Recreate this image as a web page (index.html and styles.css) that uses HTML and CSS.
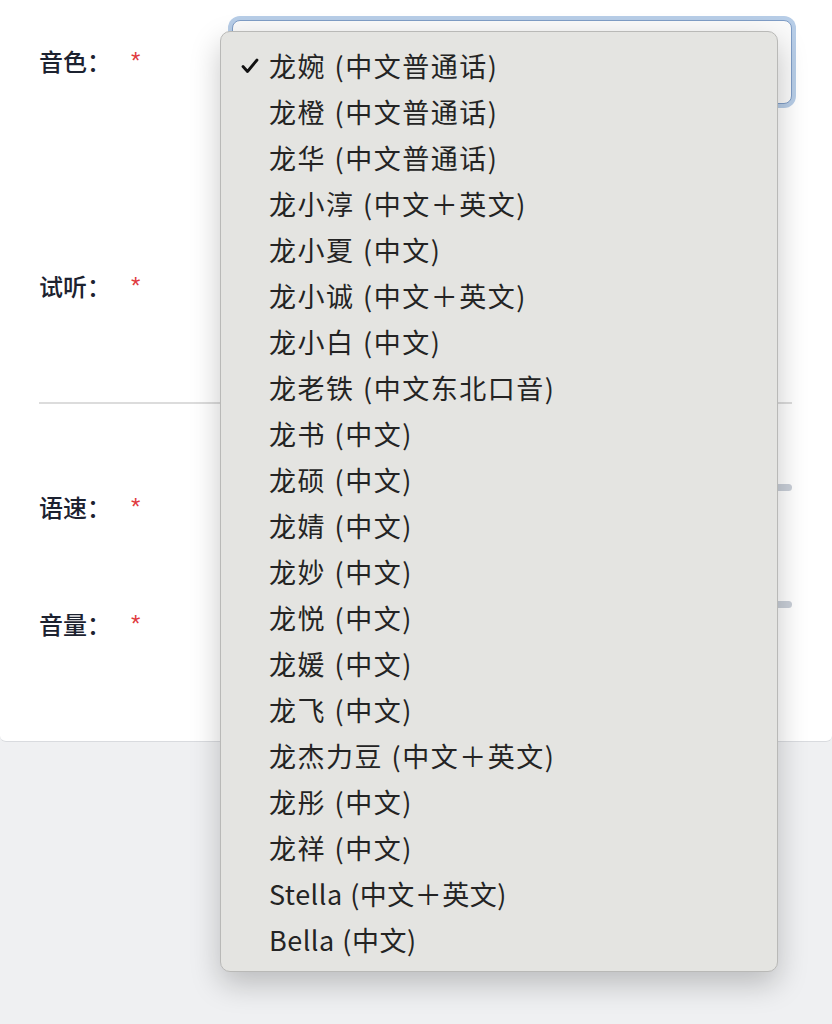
FILE: index.html
```html
<!DOCTYPE html>
<html lang="zh-CN">
<head>
  <meta charset="UTF-8" />
  <meta name="viewport" content="width=device-width, initial-scale=1.0"/>
  <title>语音设置</title>
  <link rel="stylesheet" href="styles.css">
</head>
<body>
  <div class="card">
    <div class="row row-voice">
      <label class="label">音色：<span class="req">*</span></label>
      <div class="select-box"></div>
    </div>

    <div class="row row-audio">
      <label class="label">试听：<span class="req">*</span></label>
      <div class="audio"></div>
    </div>

    <div class="divider"></div>

    <div class="row row-range">
      <label class="label">语速：<span class="req">*</span></label>
      <div class="slider"><div class="track"></div></div>
    </div>

    <div class="row row-range row-last">
      <label class="label">音量：<span class="req">*</span></label>
      <div class="slider"><div class="track"></div></div>
    </div>
  </div>

  <ul class="menu">
    <li class="selected">
      <svg class="check" width="18" height="16" viewBox="0 0 18 16"><path d="M2 8.5 L6.5 13.5 L16 2" fill="none" stroke="#111" stroke-width="2.8" stroke-linecap="round" stroke-linejoin="round"/></svg>
      龙婉 (中文普通话)
    </li>
    <li>龙橙 (中文普通话)</li>
    <li>龙华 (中文普通话)</li>
    <li>龙小淳 (中文＋英文)</li>
    <li>龙小夏 (中文)</li>
    <li>龙小诚 (中文＋英文)</li>
    <li>龙小白 (中文)</li>
    <li>龙老铁 (中文东北口音)</li>
    <li>龙书 (中文)</li>
    <li>龙硕 (中文)</li>
    <li>龙婧 (中文)</li>
    <li>龙妙 (中文)</li>
    <li>龙悦 (中文)</li>
    <li>龙媛 (中文)</li>
    <li>龙飞 (中文)</li>
    <li>龙杰力豆 (中文＋英文)</li>
    <li>龙彤 (中文)</li>
    <li>龙祥 (中文)</li>
    <li class="latin">Stella (中文＋英文)</li>
    <li class="latin">Bella (中文)</li>
  </ul>
</body>
</html>
```

FILE: styles.css
```css
* {
  margin: 0;
  padding: 0;
  box-sizing: border-box;
}

body {
  background: #eff0f2;
  font-family: "Noto Sans CJK SC", sans-serif;
  height: 1024px;
  position: relative;
  overflow: hidden;
}

.card {
  background: #fff;
  height: 742px;
  padding: 20px 40px 0 39px;
  border-bottom: 1px solid #d9dbdf;
  border-radius: 0 0 6px 6px;
}

.row {
  display: flex;
  align-items: flex-start;
}

.label {
  width: 193px;
  flex-shrink: 0;
  font-size: 24px;
  font-weight: 500;
  line-height: 82px;
  color: #1c2230;
}

.req {
  color: #e0393e;
  font-family: "Liberation Sans", sans-serif;
  font-size: 24px;
  font-weight: 400;
  margin-left: 20px;
  vertical-align: 2px;
}

.select-box {
  flex-grow: 1;
  height: 84px;
  border: 1px solid #7f9dc6;
  border-radius: 8px;
  background: #fafafa;
  box-shadow: 0 0 0 4px #b7cde7;
}

.row-audio {
  margin-top: 143px;
}

.row-audio .label {
  line-height: 78px;
}

.row-range .label {
  line-height: 80px;
}

.audio {
  flex-grow: 1;
  height: 80px;
}

.divider {
  height: 2px;
  background: #dcdcdc;
  margin-top: 75px;
}

.row-range {
  margin-top: 63px;
}

.row-last {
  margin-top: 37px;
}

.slider {
  flex-grow: 1;
  height: 80px;
  padding-top: 17px;
}

.track {
  height: 7px;
  border-radius: 4px;
  background: #c9cfd8;
}

.menu {
  list-style: none;
  position: absolute;
  left: 220px;
  top: 31px;
  width: 558px;
  height: 941px;
  padding: 11px 0 10px 0;
  background: #e4e4e1;
  border: 1px solid #b9b9b7;
  border-radius: 10px;
  box-shadow: 0 12px 30px rgba(0, 0, 0, 0.22);
}

.menu li {
  position: relative;
  height: 46px;
  line-height: 46px;
  padding-left: 48px;
  font-size: 27px;
  letter-spacing: 1.5px;
  word-spacing: 1px;
  color: #242424;
}

.menu li.latin {
  letter-spacing: 0.5px;
}

.check {
  position: absolute;
  left: 20px;
  top: 15px;
}
```
